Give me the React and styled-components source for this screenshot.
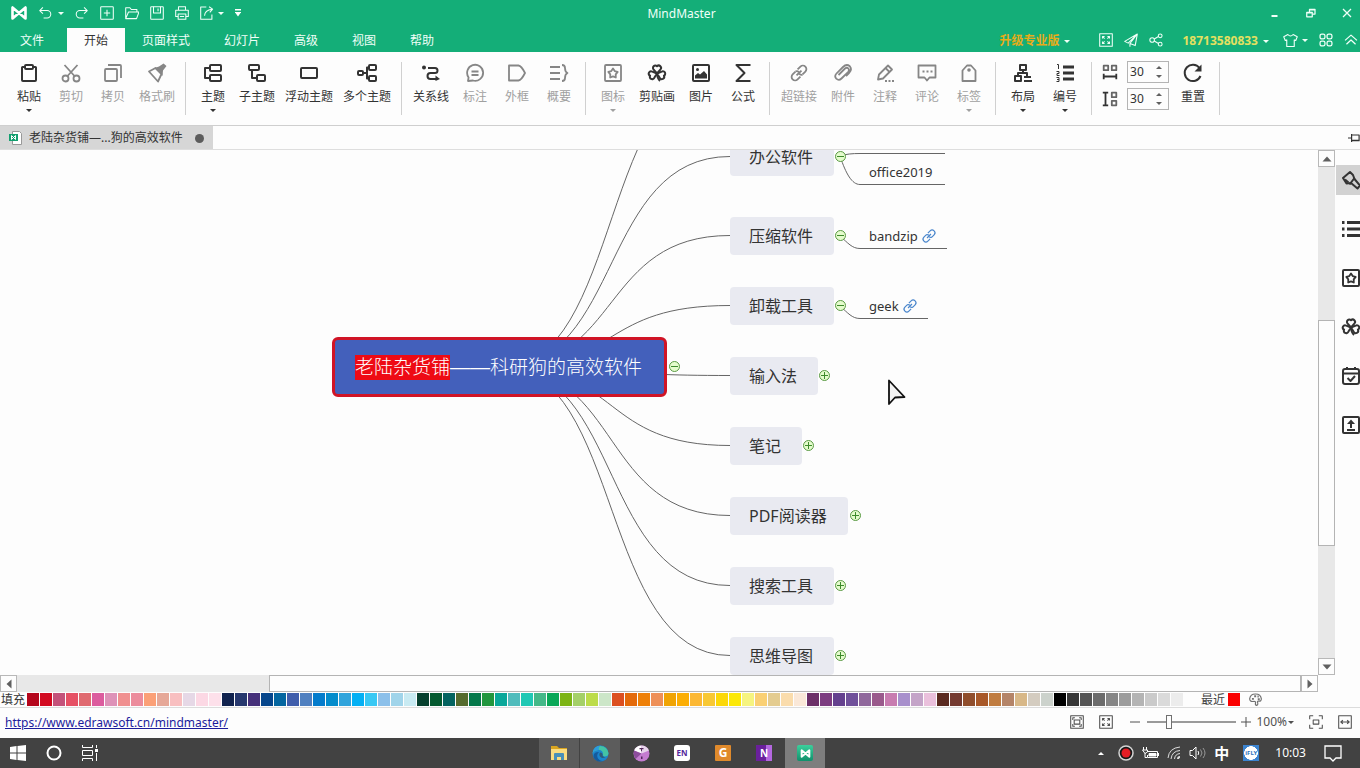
import React from "react";
import styled, { createGlobalStyle, css } from "styled-components";

const GlobalStyle = createGlobalStyle`
  * {
    box-sizing: border-box;
  }
  body {
    margin: 0;
    background: #fdfdfd;
    color: #333;
    font-family: "Noto Sans", "Noto Sans CJK SC", sans-serif;
    font-size: 12px;
    line-height: 16px;
  }
  button, input {
    margin: 0;
    padding: 0;
    border: 0;
    background: none;
    color: inherit;
    font: inherit;
  }
`;

const Window = styled.div`
  display: flex;
  flex-direction: column;
  min-height: 100vh;
  overflow: hidden;
`;

const Glyph = styled.svg`
  display: block;
  flex: none;
  fill: none;
  stroke: currentColor;
  stroke-width: ${(p) => p.$weight || 2};
  stroke-linejoin: round;
  .solid {
    fill: currentColor;
    stroke: none;
  }
`;

const STAR = "M10 5.5l1.700 2.600 3 .8-2 2.500.1 3.100-2.800-1.200-2.800 1.200.1-3.100-2-2.500 3-.8z";
const LEAF = "M10 10.5L6.7 6.6a2.3 2.3 0 0 1 3.3-3.4 2.3 2.3 0 0 1 3.3 3.4z";
const FULLSCREEN = "M5 8V5h3M12 5h3v3M15 12v3h-3M8 15H5v-3M5 5l3 3M15 5l-3 3M15 15l-3-3M5 15l3-3";

/* every glyph is drawn on a 20 x 20 grid */
const glyphs = {
  paste: (
    <>
      <path d="M6 4H3.5Q3 4 3 4.5V17q0 1 1 1h12q1 0 1-1V4.5q0-.5-.5-.5H14" />
      <rect x="6" y="2" width="8" height="4" rx="1" />
    </>
  ),
  cut: (
    <>
      <circle cx="4.5" cy="15.5" r="3" />
      <circle cx="15.5" cy="15.5" r="3" />
      <path d="M6.5 13L16.5 2M13.5 13L3.5 2" />
    </>
  ),
  copy: (
    <>
      <rect x="2" y="6" width="12" height="12" rx="1" />
      <path d="M5 2h12q1 0 1 1v12" />
    </>
  ),
  brush: (
    <>
      <path d="M2 8.500L8.500 5l6 6-3.500 7.500z" />
      <path className="solid" d="M7.500 5L12 3.500 16.500.5 19.500 3 16 7.500 15.500 13z" />
    </>
  ),
  topic: (
    <>
      <rect x="7" y="2" width="11" height="6" rx="1" />
      <rect x="7" y="12" width="11" height="6" rx="1" />
      <path d="M7 5H2v10h5" />
    </>
  ),
  subtopic: (
    <>
      <rect x="2" y="2" width="10" height="5" rx="1" />
      <rect x="10" y="12" width="8" height="6" rx="1" />
      <path d="M5 7v8h5" />
    </>
  ),
  floating: <rect x="2" y="5" width="16" height="10" rx="1" />,
  multi: (
    <>
      <rect x="1" y="8" width="5" height="4" rx="1" />
      <rect x="12" y="2" width="7" height="5" rx="1" />
      <rect x="12" y="13" width="7" height="5" rx="1" />
      <path d="M6 10h4M12 4.5h-2v11h2" />
    </>
  ),
  relation: (
    <>
      <circle className="solid" cx="3" cy="4.500" r="2" />
      <path d="M7 5h7a2.500 2.500 0 0 1 0 5H9.500a2.800 2.800 0 0 0 0 6H15" />
      <path className="solid" d="M14.500 12.500l4.500 3.500-4.500 2z" />
    </>
  ),
  callout: (
    <>
      <path d="M3 18l.6-3.600A8 8 0 1 1 8 17.500z" />
      <path d="M6.500 8.500h7M6.500 12h7" />
    </>
  ),
  frame: <path d="M2 2.500h9.500q3 .5 6.500 7.500-3.500 7-6.500 7.500H2z" />,
  summary: (
    <path d="M1 4h10M1 10h10M1 16h10M13 2q3 0 3 3 0 4 2.500 5-2.500 1-2.500 5 0 3-3 3" />
  ),
  starBox: (
    <>
      <rect x="2" y="2" width="16" height="16" rx="1" />
      <path d={STAR} strokeWidth="1.800" />
    </>
  ),
  clover: (
    <>
      <path d={LEAF} />
      <path d={LEAF} transform="rotate(-108 10 10.500)" />
      <path d={LEAF} transform="rotate(108 10 10.500)" />
      <path d="M10 10.500q.3 5 3 7.500" />
    </>
  ),
  picture: (
    <>
      <rect x="2" y="2" width="16" height="16" rx="1" />
      <circle className="solid" cx="6.500" cy="6.500" r="1.500" />
      <path className="solid" d="M4 15.500v-3l3-2.500 2 1.500 4-3.500 3 3.500v4z" />
    </>
  ),
  sigma: <path d="M17.500 2H3.500l8 8-8 8h14" />,
  link: (
    <g transform="rotate(-45 10 10)">
      <path d="M8.500 13.500H4.500a3.500 3.500 0 0 1 0-7h4M11.500 6.500h4a3.500 3.500 0 0 1 0 7h-4M6.500 10h7" />
      <path d="M8.500 6.500q2 .5 2 3M11.500 13.500q-2-.5-2-3" />
    </g>
  ),
  clip: (
    <path d="M5.500 12l6.500-6.500q2-1.500 3.300 0t0 3.300L8.500 15.500q-2.600 2.600-5.200.2-2.300-2.600.2-5.200L10 4q3.500-3.500 6.800-.8 2.700 3.300-.8 6.800l-3 3" />
  ),
  pencil: (
    <>
      <path d="M3 16.500l1-5L13 2.500l4 4-9 9z" />
      <path d="M10.500 5l4 4" />
      <path d="M10 18h9" strokeDasharray="2 1.500" />
    </>
  ),
  comment: (
    <>
      <path d="M1.500 2.500h17v12h-6L10 17.500l-2.500-3h-6z" />
      <path d="M5.500 8.500h10" strokeDasharray="2 2" />
    </>
  ),
  tag: (
    <>
      <path d="M3.500 18V7.500L8 2.500h4l4.500 5V18z" />
      <circle className="solid" cx="10" cy="7" r="1.800" />
    </>
  ),
  layout: (
    <>
      <rect x="7" y="2" width="6" height="5" />
      <rect x="2" y="13" width="6" height="5" />
      <path d="M10 7v3M5 13v-3h9v3M11 14h7M11 18h8" />
    </>
  ),
  numbering: (
    <>
      <path d="M8 4h11M8 10h11M8 16h11" strokeWidth="3" />
      <path d="M2 1.500h1.500V6M1.500 8.500h2.500v2H2v2h2.500M1.500 14.500h2.500v4H1.500M2 16.500h2" strokeWidth="1" />
    </>
  ),
  spaceX: (
    <>
      <rect x="3" y="3" width="5" height="5" stroke="#666" />
      <rect x="12" y="3" width="5" height="5" stroke="#666" />
      <path d="M2 15h16M3 12v6M17 12v6" />
    </>
  ),
  spaceY: (
    <>
      <rect x="12" y="3" width="5" height="5" stroke="#666" />
      <rect x="12" y="12" width="5" height="5" stroke="#666" />
      <path d="M5 3v14M2 3h6M2 17h6" />
    </>
  ),
  reset: (
    <>
      <path d="M17.500 13A8.200 8.200 0 1 1 16.500 5" />
      <path className="solid" d="M18.500 1.500V8.500h-7z" />
    </>
  ),
  undo: <path d="M7 2L2.500 6.500 7 11M3 6.500h10a5 5 0 0 1 0 10.500H8" />,
  redo: <path d="M13 2l4.500 4.500L13 11M17 6.500H7A5 5 0 0 0 7 17h5" />,
  plus: (
    <>
      <rect x="1" y="1" width="18" height="18" rx="1" />
      <path d="M10 5.500v9M5.500 10h9" />
    </>
  ),
  folder: <path d="M1 18V2.500h6l2 2.500h8v3.500M1 18L5 8.500h15L16.500 18z" />,
  save: (
    <>
      <rect x="1" y="1" width="18" height="18" rx="1" />
      <path d="M5 1v9h10V1M11.500 3.500v4" />
    </>
  ),
  print: (
    <>
      <path d="M5 6V1h10v5M4.500 15H1V6h18v9h-3.500" />
      <path d="M4.500 11.500h11V19h-11zM7 15h6" />
    </>
  ),
  share: (
    <>
      <path d="M9 1.500H1V19h16v-7" />
      <path d="M6.500 14q0-8 11-9.500M13 1l5 3.500-4 4.500" />
    </>
  ),
  fullscreen: (
    <>
      <rect x="1" y="1" width="18" height="18" />
      <path d={FULLSCREEN} />
    </>
  ),
  plane: <path d="M19 1.500L1 12l5 2.500zM19 1.500L8.500 15v4.500M8.500 15L16 18l3-16.500" />,
  nodes: (
    <>
      <circle cx="4.500" cy="10" r="3.300" />
      <circle cx="16" cy="4" r="2.700" />
      <circle cx="16" cy="16" r="2.700" />
      <path d="M7.500 8.500l6-3.500M7.500 11.500l6 3.500" />
    </>
  ),
  shirt: <path d="M6.500 2q3.500 4 7 0l5.500 3-2 5-2-.8V18H5V9.200L3 10 1 5z" />,
  apps: (
    <>
      <rect x="1.500" y="1.500" width="7" height="7" rx="2.500" />
      <rect x="11.500" y="1.500" width="7" height="7" rx="2.500" />
      <rect x="1.500" y="11.500" width="7" height="7" rx="2.500" />
      <rect x="11.500" y="11.500" width="7" height="7" rx="2.500" />
    </>
  ),
  collapse: <path d="M1.500 10.500L10 3l8.500 7.500M3.500 16l6.500-6 6.500 6" />,
  minimize: <path d="M3 16h12" strokeWidth="4" />,
  restore: (
    <>
      <path d="M1.500 8.500h11v9h-11zM1.500 9.500h11" />
      <path d="M7 8V2.500h11V12h-5M7 3.500h11" />
    </>
  ),
  close: <path d="M2 2l16 16M18 2L2 18" />,
  pin: <path d="M0 10h6M6 3.500v13M6 5h12.500v9.500H6M6 14h12" />,
  paintbrush: (
    <>
      <path d="M2 8l7-6 3 3 1.500 4 5.500 6.500-2.500 3-6.500-5.500-4.500.5z" />
      <path d="M8.500 14.500l5-6.500M4 9.500l3.500 3" />
    </>
  ),
  outline: (
    <>
      <path d="M6 3.500h13M6 10h13M6 16.500h13" strokeWidth="3" />
      <path d="M1 3.500h2.500M1 10h2.500M1 16.500h2.500" strokeWidth="3" />
    </>
  ),
  calendar: (
    <>
      <rect x="2" y="3" width="16" height="15" rx="2" />
      <path d="M2 7.500h16M6 1v3M14 1v3M6.500 12l3 3 4.500-5" />
    </>
  ),
  upload: (
    <>
      <rect x="2" y="2" width="16" height="16" rx="1" />
      <path d="M6 15h8M10 13V8" />
      <path className="solid" d="M10 4.500l4 4.500H6z" />
    </>
  ),
  palette: (
    <>
      <path d="M12 19q-3-.5-2-3.500t-3-2.500Q1 13.500 1 9q1-7.500 9-7.500T19 9q0 4-4 3.500-3 0-1.500 3 .5 3-1.500 3.500z" />
      <path d="M4.500 9h3M8 5h3M13 5.500h2M13.500 9.500h3" strokeWidth="3" />
    </>
  ),
  fitPage: (
    <>
      <rect x="1" y="1" width="18" height="18" />
      <rect x="6" y="7" width="8" height="6" />
      <path d="M4 7V4h3M13 4h3v3M16 13v3h-3M7 16H4v-3" />
    </>
  ),
  fitSelection: (
    <>
      <path d="M1 6V1h5M14 1h5v5M19 14v5h-5M6 19H1v-5" />
      <rect x="6" y="7" width="8" height="6" />
    </>
  ),
  fitWidth: (
    <>
      <rect x="1" y="1" width="18" height="18" />
      <path d="M4 10h12M7 7.500L4 10l3 2.500M13 7.500l3 2.500-3 2.500" />
    </>
  ),
  minus: <path d="M0 10h20" />,
  add: <path d="M0 10h20M10 0v20" />,
};

function Icon({ name, size = 20, weight }) {
  return (
    <Glyph viewBox="0 0 20 20" width={size} height={size} $weight={weight} aria-hidden="true">
      {glyphs[name]}
    </Glyph>
  );
}

const Caret = styled.span`
  flex: none;
  width: 0;
  height: 0;
  border: 3px solid transparent;
  ${(p) =>
    p.$up
      ? css`
          border-top: 0;
          border-bottom-color: currentColor;
        `
      : css`
          border-bottom: 0;
          border-top-color: currentColor;
        `}
`;

/* ---------- title bar and tabs ---------- */

const Header = styled.header`
  background: #14ae78;
  color: #f0fff8;
`;

const TitleBar = styled.div`
  display: grid;
  grid-template-columns: 1fr auto 1fr;
  align-items: center;
  height: 28px;
  padding: 0 8px 2px 11px;
`;

const QuickTools = styled.div`
  display: flex;
  align-items: center;
  gap: 11px;
`;

const Split = styled.div`
  display: flex;
  align-items: center;
  gap: ${(p) => p.$gap || 4}px;
`;

const IconButton = styled.button`
  display: flex;
  align-items: center;
  justify-content: center;
`;

const Title = styled.h1`
  margin: 0;
  padding-top: 1px;
  font-size: 12px;
  font-weight: 400;
`;

const WindowButtons = styled.div`
  display: flex;
  justify-content: flex-end;
  gap: 26px;
`;

const TabRow = styled.nav`
  display: flex;
  align-items: stretch;
  height: 24px;
  padding: 0 2px 0 3px;
`;

const Tab = styled.button`
  padding: 2px 17px 0;
  background: ${(p) => (p.$active ? "#fdfdfd" : "transparent")};
  color: ${(p) => (p.$active ? "#333" : "inherit")};
  &:first-child {
    margin-right: 6px;
  }
`;

const Account = styled.div`
  display: flex;
  align-items: center;
  gap: 11px;
  margin-left: auto;
`;

const AccountButton = styled.button`
  display: flex;
  align-items: center;
  gap: 5px;
  margin: 0 ${(p) => p.$after || 0}px 0 ${(p) => p.$before || 0}px;
  padding-top: 2px;
  font-weight: 700;
  color: ${(p) => p.$tone};
  ${Caret} {
    color: #f0fff8;
  }
`;

const LogoMark = () => (
  <svg width="16" height="14" viewBox="0 0 16 14" aria-hidden="true">
    <path
      d="M1.500 1.500v11l13-11v11z"
      fill="none"
      stroke="#fff"
      strokeWidth="2.600"
      strokeLinejoin="round"
    />
  </svg>
);

/* ---------- ribbon ---------- */

const Ribbon = styled.div`
  display: flex;
  align-items: flex-start;
  height: 74px;
  padding: 10px 2px 0;
  border-bottom: 1px solid #cfcfcf;
`;

const Group = styled.div`
  display: flex;
  gap: ${(p) => p.$gap || 10}px;
  height: 53px;
  padding: 1px 10px 0 ${(p) => p.$lead || 11}px;
  border-right: 1px solid #d0d0d0;
`;

const Tool = styled.button`
  display: flex;
  flex-direction: column;
  align-items: center;
  min-width: 32px;
  white-space: nowrap;
  color: #333;
  &:disabled {
    color: #a0a0a0;
  }
  &:disabled ${Glyph} {
    color: #868686;
  }
  ${Caret} {
    margin-top: 4px;
  }
`;

const ToolLabel = styled.span`
  margin-top: 6px;
`;

const Spacing = styled.div`
  display: flex;
  flex-direction: column;
  gap: 5px;
  margin: -2px 0 0;
`;

const SpacingRow = styled.label`
  display: flex;
  align-items: center;
  gap: 8px;
`;

const Spinner = styled.span`
  display: flex;
  align-items: center;
  width: 42px;
  height: 22px;
  padding: 0 6px 0 2px;
  border: 1px solid #b4b4b4;
  input {
    flex: 1;
    min-width: 0;
    outline: 0;
  }
`;

const SpinnerArrows = styled.span`
  display: flex;
  flex-direction: column;
  gap: 6px;
  color: #606060;
  button {
    display: block;
    line-height: 0;
  }
  ${Caret} {
    display: block;
  }
`;

const ribbonGroups = [
  [
    { icon: "paste", label: "粘贴", menu: true },
    { icon: "cut", label: "剪切", off: true },
    { icon: "copy", label: "拷贝", off: true },
    { icon: "brush", label: "格式刷", off: true },
  ],
  [
    { icon: "topic", label: "主题", menu: true },
    { icon: "subtopic", label: "子主题" },
    { icon: "floating", label: "浮动主题" },
    { icon: "multi", label: "多个主题" },
  ],
  [
    { icon: "relation", label: "关系线" },
    { icon: "callout", label: "标注", off: true },
    { icon: "frame", label: "外框", off: true },
    { icon: "summary", label: "概要", off: true },
  ],
  [
    { icon: "starBox", label: "图标", off: true, menu: true },
    { icon: "clover", label: "剪贴画" },
    { icon: "picture", label: "图片" },
    { icon: "sigma", label: "公式" },
  ],
  [
    { icon: "link", label: "超链接", off: true },
    { icon: "clip", label: "附件", off: true },
    { icon: "pencil", label: "注释", off: true },
    { icon: "comment", label: "评论", off: true },
    { icon: "tag", label: "标签", off: true, menu: true },
  ],
  [
    { icon: "layout", label: "布局", menu: true },
    { icon: "numbering", label: "编号", menu: true },
  ],
];

function RibbonTool({ tool }) {
  return (
    <Tool type="button" disabled={tool.off}>
      <Icon name={tool.icon} weight={tool.off ? 1.8 : 2} />
      <ToolLabel>{tool.label}</ToolLabel>
      {tool.menu && <Caret />}
    </Tool>
  );
}

function SpacingField({ icon, label }) {
  return (
    <SpacingRow>
      <Icon name={icon} size={18} />
      <Spinner>
        <input aria-label={label} defaultValue="30" />
        <SpinnerArrows>
          <button type="button" aria-label="增加">
            <Caret $up />
          </button>
          <button type="button" aria-label="减少">
            <Caret />
          </button>
        </SpinnerArrows>
      </Spinner>
    </SpacingRow>
  );
}

/* ---------- document tabs ---------- */

const DocBar = styled.div`
  display: flex;
  align-items: center;
  justify-content: space-between;
  height: 24px;
  border-bottom: 1px solid #dedede;
`;

const DocTab = styled.button`
  display: flex;
  align-items: center;
  gap: 7px;
  height: 23px;
  padding: 1px 9px 0;
  background: #d6d6d6;
`;

const UnsavedDot = styled.span`
  width: 9px;
  height: 9px;
  margin-left: 5px;
  border-radius: 50%;
  background: #5c5c5c;
`;

/* ---------- workspace ---------- */

const Workspace = styled.main`
  display: flex;
  flex: 1;
  min-height: 0;
`;

const BoardColumn = styled.div`
  display: flex;
  flex: 1;
  flex-direction: column;
  min-width: 0;
`;

const Board = styled.div`
  position: relative;
  flex: 1;
  overflow: hidden;
`;

const Wires = styled.svg`
  position: absolute;
  inset: 0;
  width: 100%;
  height: 100%;
  fill: none;
  stroke: #666;
`;

const Topic = styled.div`
  position: absolute;
  left: ${(p) => p.$x}px;
  top: ${(p) => p.$y}px;
  display: flex;
  align-items: center;
  height: 38px;
  padding: 0 21px 0 19px;
  border-radius: 4px;
  background: #e9eaf1;
  color: #333;
  font-size: 16px;
  line-height: 24px;
  white-space: nowrap;
`;

const CentralTopic = styled(Topic)`
  height: 60px;
  padding: 0 22px 0 20px;
  border: 3px solid #d01426;
  border-radius: 6px;
  background: #4360bb;
  color: #fff;
  font-size: 19px;
  font-weight: 300;
  line-height: 25px;
  mark {
    background: #ee0a14;
    color: inherit;
  }
`;

const Dash = styled.span`
  font-family: "Liberation Sans", sans-serif;
  font-size: 20px;
`;

const Leaf = styled.div`
  position: absolute;
  left: ${(p) => p.$x}px;
  top: ${(p) => p.$y}px;
  display: flex;
  align-items: center;
  gap: 3px;
  font-size: 13px;
  line-height: 18px;
  a {
    color: #4a86cc;
  }
`;

const Toggle = styled.button`
  position: absolute;
  left: ${(p) => p.$x}px;
  top: ${(p) => p.$y}px;
  width: 13px;
  height: 13px;
  svg {
    display: block;
  }
`;

const Pointer = styled.svg`
  position: absolute;
  left: 887px;
  top: 228px;
`;

/* node positions on the board; y is the top edge of the node */
const topics = [
  { label: "办公软件", y: -12, toggle: 840, open: true },
  { label: "压缩软件", y: 67, toggle: 840, open: true },
  { label: "卸载工具", y: 137, toggle: 840, open: true },
  { label: "输入法", y: 207, toggle: 824 },
  { label: "笔记", y: 277, toggle: 808 },
  { label: "PDF阅读器", y: 347, toggle: 855 },
  { label: "搜索工具", y: 417, toggle: 840 },
  { label: "思维导图", y: 487, toggle: 840 },
];

const leaves = [
  { label: "office2019", y: 13 },
  { label: "bandzip", y: 77, link: true },
  { label: "geek", y: 147, link: true },
];

const branchEnds = [-84, 6, 85, 155, 225, 295, 365, 435, 505];

const wire = (y) => `M502 217C622 217 600 ${y + 0.5} 730 ${y + 0.5}`;

function FoldButton({ x, y, open }) {
  return (
    <Toggle type="button" $x={x - 6} $y={y - 7} aria-label={open ? "折叠" : "展开"}>
      <svg width="13" height="13" viewBox="0 0 13 13">
        <circle cx="6.500" cy="6.500" r="5" fill="#e4fccc" stroke="#5a9a44" />
        <path d={open ? "M3 6.500h7" : "M3 6.500h7M6.500 3v7"} stroke="#3d8a2c" />
      </svg>
    </Toggle>
  );
}

function MindMap() {
  return (
    <Board>
      <Wires>
        {branchEnds.map((y) => (
          <path key={y} d={wire(y)} />
        ))}
        <path d="M840 6C846 4 852 3.500 860 3.500H945" />
        <path d="M840 6C846 24 852 34.500 860 34.500H945" />
        <path d="M840 86C848 93 852 98.500 860 98.500H947" />
        <path d="M840 156C848 163 852 168.500 860 168.500H928" />
      </Wires>
      <CentralTopic $x={332} $y={187}>
        <mark>老陆杂货铺</mark>
        <Dash>——</Dash>
        科研狗的高效软件
      </CentralTopic>
      <FoldButton x={674} y={217} open />
      {topics.map((topic) => (
        <React.Fragment key={topic.label}>
          <Topic $x={730} $y={topic.y}>
            {topic.label}
          </Topic>
          <FoldButton x={topic.toggle} y={topic.y + 19} open={topic.open} />
        </React.Fragment>
      ))}
      {leaves.map((leaf) => (
        <Leaf key={leaf.label} $x={869} $y={leaf.y}>
          {leaf.label}
          {leaf.link && (
            <a href="#link" aria-label={leaf.label}>
              <Icon name="link" size={16} weight={1.5} />
            </a>
          )}
        </Leaf>
      ))}
      <Pointer width="20" height="28" viewBox="0 0 20 28">
        <path
          d="M2 2.500V26l6-6.500 9.500-.5z"
          fill="#f4f4f4"
          stroke="#111"
          strokeWidth="1.800"
          strokeLinejoin="round"
        />
      </Pointer>
    </Board>
  );
}

const ScrollBar = styled.div`
  display: flex;
  flex: none;
  flex-direction: ${(p) => (p.$vertical ? "column" : "row")};
  ${(p) => (p.$vertical ? "width: 17px" : "height: 17px")};
  background: #e8e8e8;
`;

const ScrollArrow = styled.button`
  display: flex;
  flex: none;
  align-items: center;
  justify-content: center;
  width: 17px;
  height: 17px;
  border: 1px solid #b8b8b8;
  background: #fdfdfd;
  color: #606060;
  svg {
    transform: rotate(${(p) => p.$turn || 0}deg);
  }
`;

const ScrollSpace = styled.div`
  flex: ${(p) => p.$share};
`;

const ScrollThumb = styled.div`
  flex: ${(p) => p.$share};
  border: 1px solid #b4b4b4;
  background: #fdfdfd;
`;

function ScrollStep({ turn, label }) {
  return (
    <ScrollArrow type="button" $turn={turn} aria-label={label}>
      <svg width="10" height="10" viewBox="0 0 10 10">
        <path d="M5 2.500L9.500 7.500h-9z" fill="currentColor" />
      </svg>
    </ScrollArrow>
  );
}

const VerticalColumn = styled.div`
  display: flex;
  padding-bottom: 17px;
`;

const SidePane = styled.aside`
  display: flex;
  flex-direction: column;
  gap: 19px;
  width: 25px;
  padding: 15px 0 0 1px;
`;

const SideButton = styled.button`
  display: flex;
  align-items: center;
  height: 30px;
  padding-left: 5px;
  overflow: hidden;
  background: ${(p) => (p.$active ? "#d2d2d2" : "transparent")};
`;

/* ---------- colour strip ---------- */

const swatches = `
  b5061c d20a20 c4527a e65064 e06a70 dc5c9e de92b8 f09090 ec8c9c fba077 e6a898 f8bfc0 e6d8e6 fcd8e4 fde0ea
  11224e 27386e 46307a 06468c 0466a0 405eac 5080c0 047ccc 048ccc 30a4dc 04b0f4 38c8f4 8cc0ea a0d4ea c8eaf2
  06402e 045a30 046460 566c2e 04784a 22963e 0aa89a 50bcbc 20c8b4 44b888 0aa858 7cb414 a4d068 bcdc4a cce6c8
  dc5020 e46a0a ee8008 ee9058 f0a404 fcae04 fcb834 f8c834 fcd808 fce808 f6f480 fad074 e4cc90 fadcac fae8d8
  6c3068 7c3c80 64408e 70509a 90689c 9a5a8c c87cb0 a890cc c4a4c8 eac0dc
  5a2a20 743a30 904e2c a85828 c07c40 b48468 d8b888 d4ccc0 ccd2cc
  000000 363636 545454 6c6c6c 868686 9c9c9c b4b4b4 cacaca dadada ececec
`
  .trim()
  .split(/\s+/);

const ColorStrip = styled.div`
  display: flex;
  align-items: center;
  height: 16px;
  padding-left: 1px;
  border-bottom: 1px solid #dcdcdc;
`;

const SwatchList = styled.div`
  display: flex;
  gap: 1px;
  margin: 0 18px 0 2px;
`;

const Swatch = styled.button`
  width: 12px;
  height: 13px;
  background: #${(p) => p.$hex};
`;

const RecentColors = styled.div`
  display: flex;
  align-items: center;
  gap: 3px;
  color: #444;
  svg {
    margin-left: 6px;
    color: #707070;
  }
`;

/* ---------- status bar ---------- */

const StatusBar = styled.footer`
  display: flex;
  align-items: center;
  justify-content: space-between;
  height: 30px;
  padding: 0 8px 2px 5px;
  color: #505050;
  a {
    padding-top: 2px;
    color: #1c1c9c;
  }
`;

const ViewTools = styled.div`
  display: flex;
  align-items: center;
  gap: 15px;
`;

const Zoom = styled.div`
  display: flex;
  align-items: center;
  gap: 5px;
  margin-left: 2px;
`;

const ZoomSlider = styled.input`
  width: 89px;
  height: 14px;
  margin: 0 0 0 2px;
  appearance: none;
  &::-webkit-slider-runnable-track {
    height: 2px;
    background: #9a9a9a;
  }
  &::-webkit-slider-thumb {
    appearance: none;
    width: 6px;
    height: 14px;
    margin-top: -6px;
    border: 1px solid #707070;
    background: #fdfdfd;
  }
`;

const ZoomValue = styled.button`
  display: flex;
  align-items: center;
  gap: 1px;
`;

/* ---------- desktop taskbar ---------- */

const Taskbar = styled.div`
  display: grid;
  grid-template-columns: 1fr auto 1fr;
  height: 30px;
  padding-left: 4px;
  background: #424242;
  color: #fff;
`;

const TaskGroup = styled.div`
  display: flex;
  align-items: center;
  gap: ${(p) => p.$gap}px;
  padding-left: ${(p) => p.$inset || 0}px;
`;

const TaskApp = styled.button`
  display: flex;
  align-items: center;
  justify-content: center;
  width: 40px;
  height: 30px;
  background: ${(p) => p.$tint || "transparent"};
`;

const Tray = styled.div`
  display: flex;
  align-items: center;
  justify-content: flex-end;
  gap: 8px;
  padding-right: 18px;
  > ${Caret} {
    margin-right: 6px;
  }
`;

const Clock = styled.time`
  margin: 0 10px 0 8px;
`;

const InputMode = styled.span`
  margin-right: 6px;
  font-size: 15px;
  font-weight: 700;
  line-height: 16px;
`;

const AppBadge = styled.span`
  display: flex;
  align-items: center;
  justify-content: center;
  width: 16px;
  height: 16px;
  border-radius: ${(p) => p.$radius || 0}px;
  background: ${(p) => p.$fill};
  color: ${(p) => p.$ink || "#fff"};
  font-size: ${(p) => p.$text || 8}px;
  font-weight: 700;
  line-height: 16px;
`;

const FolderApp = () => (
  <svg width="18" height="16" viewBox="0 0 18 16">
    <path d="M1 1h6l2 2h8v12H1z" fill="#d9a520" />
    <path d="M1 4h16v11H1z" fill="#fbdc80" />
    <path d="M4 15V9q0-1 1-1h8q1 0 1 1v6h-3v-3H7v3z" fill="#4a90b8" />
  </svg>
);

const EdgeApp = () => (
  <svg width="17" height="17" viewBox="0 0 17 17">
    <circle cx="8.500" cy="8.500" r="8" fill="#1b84cc" />
    <path d="M.6 8A8 8 0 0 1 16.500 8q0 3.500-4 3.500-2 0-1.500-2Q11 5 7 5 2.500 5 .6 8z" fill="#44c4a4" />
    <path d="M.6 8Q1.500 1 9 .6q-3 1.400-2 4.400Q2.500 5 .6 8z" fill="#2c9cdc" />
    <path d="M7 7q-3 3-1 6.500t7 2Q4 18.500 1.500 12 1 7 7 7z" fill="#155a9c" />
    <path d="M8 7.500q3 .5 2.500 2.500 0 2 3 2-3 2-5 0t-.5-4.500z" fill="#305c78" />
  </svg>
);

const DiscApp = () => (
  <svg width="17" height="17" viewBox="0 0 17 17">
    <circle cx="8.500" cy="8.500" r="8" fill="#c47cd0" />
    <path d="M8.500 8.500L1 5.500Q3.500.5 8.500.5z" fill="#fff" />
    <path d="M8.500 8.500V.5q5 0 7.500 5z" fill="#e8d4ec" />
    <path d="M8.500 8.500l-6 5.500Q0 10 1 5.500z" fill="#8c4c9c" />
    <path d="M6.500 3h4v1.300H9v2H8v-2H6.500zM8 11.500h1.500V14H8z" fill="#53285c" />
  </svg>
);

const MindApp = () => (
  <AppBadge $fill="linear-gradient(#3cd09c, #10906c)" $radius={2}>
    <svg width="11" height="9" viewBox="0 0 16 14">
      <path
        d="M2 2v10L14 2v10z"
        fill="none"
        stroke="#fff"
        strokeWidth="3"
        strokeLinejoin="round"
      />
    </svg>
  </AppBadge>
);

const taskApps = [
  { name: "文件资源管理器", tint: "#5c5c5c", icon: <FolderApp /> },
  { name: "Edge", tint: "#5c5c5c", icon: <EdgeApp /> },
  { name: "光盘", icon: <DiscApp /> },
  {
    name: "EndNote",
    icon: (
      <AppBadge $fill="#fff" $ink="#53289c" $radius={3}>
        EN
      </AppBadge>
    ),
  },
  {
    name: "PDF",
    icon: (
      <AppBadge $fill="#e08a2c" $text={12} $radius={1}>
        G
      </AppBadge>
    ),
  },
  {
    name: "OneNote",
    icon: (
      <AppBadge $fill="linear-gradient(90deg, #6a209c 65%, #b468e0 65%)" $text={10}>
        N
      </AppBadge>
    ),
  },
  { name: "MindMaster", tint: "#7e7e7e", icon: <MindApp /> },
];

const WindowsMark = () => (
  <svg width="16" height="16" viewBox="0 0 16 16" fill="#fff">
    <path d="M0 2l6.500-1v6.500H0zM7.500 1L16 0v7.500H7.500zM0 8.500h6.500V15L0 14zM7.500 8.500H16V16l-8.500-1z" />
  </svg>
);

const TaskViewMark = () => (
  <svg width="16" height="16" viewBox="0 0 16 16" fill="none" stroke="#fff">
    <path d="M.5 0v2.500h10V0M.5 5.500h10v5H.5zM.5 16v-2.500h10V16M14.500 0v3M14.500 8v8" />
    <path d="M13 5.500h3" strokeWidth="3" />
  </svg>
);

function TrayIcons() {
  return (
    <>
      <Caret $up />
      <svg width="16" height="16" viewBox="0 0 16 16">
        <circle cx="8" cy="8" r="7" fill="#181818" stroke="#d4d4d4" strokeWidth="1.500" />
        <circle cx="8" cy="8" r="4.500" fill="#e41c24" />
      </svg>
      <svg width="17" height="12" viewBox="0 0 17 12" fill="none" stroke="#fff">
        <path d="M5 4.500h10.500v6h-10V8M16.500 6v3M1.500 0v3M4.500 0v3M.5 3h5v2L3 6.500zM3 6v4.500h2" />
        <path d="M7 6.500h7v2.500H7z" fill="#fff" />
      </svg>
      <svg width="14" height="14" viewBox="0 0 14 14" fill="none" stroke="#ddd">
        <path d="M1 12Q2 2 13 1M4 13q1-8 9-8.500M7.500 13q.5-5 5.500-5.500" />
        <path d="M11 13q0-2 2-2" strokeWidth="2" />
      </svg>
      <svg width="17" height="14" viewBox="0 0 17 14" fill="none" stroke="#fff">
        <path d="M1 4.500h2.500L7 1v12L3.500 9.500H1zM9 5q1.500 2 0 4" />
        <path d="M11.500 3.500q3 3.500 0 7M14 2q4 5 0 10" stroke="#999" />
      </svg>
      <InputMode>中</InputMode>
      <AppBadge $fill="radial-gradient(circle, #fff 58%, #3c84d0 62%)" $ink="#2c74c0" $text={6}>
        iFLY
      </AppBadge>
    </>
  );
}

const quickTools = ["redo", "plus", "folder", "save", "print"];
const tabs = ["文件", "开始", "页面样式", "幻灯片", "高级", "视图", "帮助"];
const sideTools = ["paintbrush", "outline", "starBox", "clover", "calendar", "upload"];

export default function App() {
  return (
    <Window>
      <GlobalStyle />
      <Header>
        <TitleBar>
          <QuickTools>
            <LogoMark />
            <Split $gap={6}>
              <IconButton type="button" aria-label="撤销">
                <Icon name="undo" size={14} weight={1.5} />
              </IconButton>
              <Caret />
            </Split>
            {quickTools.map((name) => (
              <IconButton key={name} type="button" aria-label={name}>
                <Icon name={name} size={14} weight={1.5} />
              </IconButton>
            ))}
            <Split>
              <IconButton type="button" aria-label="分享">
                <Icon name="share" size={14} weight={1.5} />
              </IconButton>
              <Caret />
            </Split>
            <svg width="6" height="8" viewBox="0 0 6 8" aria-hidden="true">
              <path d="M0 0h6v1.500H0zM0 3h6v1H5.500L3 7.500.5 4H0z" fill="#fff" />
            </svg>
          </QuickTools>
          <Title>MindMaster</Title>
          <WindowButtons>
            {["minimize", "restore", "close"].map((name) => (
              <IconButton key={name} type="button" aria-label={name}>
                <Icon name={name} size={10} weight={2.5} />
              </IconButton>
            ))}
          </WindowButtons>
        </TitleBar>
        <TabRow>
          {tabs.map((label) => (
            <Tab key={label} type="button" $active={label === "开始"}>
              {label}
            </Tab>
          ))}
          <Account>
            <AccountButton type="button" $tone="#e8ac18" $after={18}>
              升级专业版 <Caret />
            </AccountButton>
            {["fullscreen", "plane", "nodes"].map((name) => (
              <IconButton key={name} type="button" aria-label={name}>
                <Icon name={name} size={14} weight={1.5} />
              </IconButton>
            ))}
            <AccountButton type="button" $tone="#e4e060" $before={8} $after={3}>
              18713580833 <Caret />
            </AccountButton>
            <Split>
              <IconButton type="button" aria-label="主题">
                <Icon name="shirt" size={15} weight={1.5} />
              </IconButton>
              <Caret />
            </Split>
            {["apps", "collapse"].map((name) => (
              <IconButton key={name} type="button" aria-label={name}>
                <Icon name={name} size={14} weight={1.8} />
              </IconButton>
            ))}
          </Account>
        </TabRow>
      </Header>

      <Ribbon>
        {ribbonGroups.map((tools) => (
          <Group key={tools[0].icon}>
            {tools.map((tool) => (
              <RibbonTool key={tool.icon} tool={tool} />
            ))}
          </Group>
        ))}
        <Group $gap={8} $lead={9}>
          <Spacing>
            <SpacingField icon="spaceX" label="水平间距" />
            <SpacingField icon="spaceY" label="垂直间距" />
          </Spacing>
          <RibbonTool tool={{ icon: "reset", label: "重置" }} />
        </Group>
      </Ribbon>

      <DocBar>
        <DocTab type="button">
          <svg width="13" height="14" viewBox="0 0 13 14" aria-hidden="true">
            <path d="M3.500.5h7l2 2v11h-9z" fill="#fff" stroke="#999" />
            <path d="M0 3h9v7H0z" fill="#14a070" />
            <path d="M2.500 4.500v4l4-4v4z" fill="none" stroke="#fff" />
          </svg>
          老陆杂货铺—...狗的高效软件
          <UnsavedDot />
        </DocTab>
        <IconButton type="button" aria-label="固定">
          <Icon name="pin" size={12} weight={2} />
        </IconButton>
      </DocBar>

      <Workspace>
        <BoardColumn>
          <MindMap />
          <ScrollBar>
            <ScrollStep turn={-90} label="向左" />
            <ScrollSpace $share={252} />
            <ScrollThumb $share={1032} />
            <ScrollStep turn={90} label="向右" />
          </ScrollBar>
        </BoardColumn>
        <VerticalColumn>
          <ScrollBar $vertical>
            <ScrollStep label="向上" />
            <ScrollSpace $share={154} />
            <ScrollThumb $share={225} />
            <ScrollSpace $share={113} />
            <ScrollStep turn={180} label="向下" />
          </ScrollBar>
        </VerticalColumn>
        <SidePane>
          {sideTools.map((name, index) => (
            <SideButton key={name} type="button" $active={index === 0} aria-label={name}>
              <Icon name={name} />
            </SideButton>
          ))}
        </SidePane>
      </Workspace>

      <ColorStrip>
        填充
        <SwatchList>
          {swatches.map((hex) => (
            <Swatch key={hex} type="button" $hex={hex} aria-label={`#${hex}`} />
          ))}
        </SwatchList>
        <RecentColors>
          最近
          <Swatch type="button" $hex="fa0000" aria-label="#fa0000" />
          <Icon name="palette" size={13} weight={1.8} />
        </RecentColors>
      </ColorStrip>

      <StatusBar>
        <a href="https://www.edrawsoft.cn/mindmaster/">https://www.edrawsoft.cn/mindmaster/</a>
        <ViewTools>
          <IconButton type="button" aria-label="适合页面">
            <Icon name="fitPage" size={14} weight={1.5} />
          </IconButton>
          <IconButton type="button" aria-label="全屏">
            <Icon name="fullscreen" size={14} weight={1.5} />
          </IconButton>
          <Zoom>
            <IconButton type="button" aria-label="缩小">
              <Icon name="minus" size={10} weight={2} />
            </IconButton>
            <ZoomSlider type="range" defaultValue="22" aria-label="缩放" />
            <IconButton type="button" aria-label="放大">
              <Icon name="add" size={10} weight={2} />
            </IconButton>
            <ZoomValue type="button">
              100%
              <Caret />
            </ZoomValue>
          </Zoom>
          <IconButton type="button" aria-label="适合选区">
            <Icon name="fitSelection" size={14} weight={1.5} />
          </IconButton>
          <IconButton type="button" aria-label="适合宽度">
            <Icon name="fitWidth" size={14} weight={1.5} />
          </IconButton>
        </ViewTools>
      </StatusBar>

      <Taskbar>
        <TaskGroup $gap={20} $inset={6}>
          <IconButton type="button" aria-label="开始">
            <WindowsMark />
          </IconButton>
          <IconButton type="button" aria-label="搜索">
            <svg width="16" height="16" viewBox="0 0 16 16">
              <circle cx="8" cy="8" r="6.500" fill="none" stroke="#fff" strokeWidth="2" />
            </svg>
          </IconButton>
          <IconButton type="button" aria-label="任务视图">
            <TaskViewMark />
          </IconButton>
        </TaskGroup>
        <TaskGroup $gap={1}>
          {taskApps.map((app) => (
            <TaskApp key={app.name} type="button" $tint={app.tint} aria-label={app.name}>
              {app.icon}
            </TaskApp>
          ))}
        </TaskGroup>
        <Tray>
          <TrayIcons />
          <Clock>10:03</Clock>
          <svg width="18" height="17" viewBox="0 0 18 17">
            <path d="M1 1h16v12h-5l-3 3-3-3H1z" fill="none" stroke="#fff" strokeWidth="1.300" />
          </svg>
        </Tray>
      </Taskbar>
    </Window>
  );
}
